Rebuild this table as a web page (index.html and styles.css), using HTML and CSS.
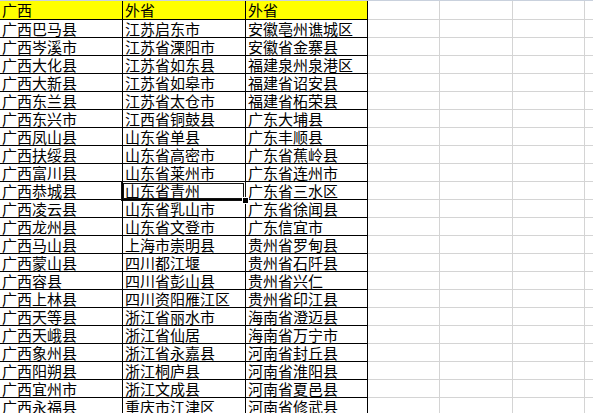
FILE: index.html
```html
<!DOCTYPE html>
<html lang="zh">
<head>
<meta charset="utf-8">
<link rel="stylesheet" href="styles.css">
</head>
<body>
<div class="sheet">
  <div class="topline"></div>
  <div class="row head">
    <div class="c c1">广西</div><div class="c c2">外省</div><div class="c c3">外省</div>
    <div class="g g1"></div><div class="g g2"></div><div class="g g3"></div><div class="g g4"></div>
  </div>
  <div class="row"><div class="c c1">广西巴马县</div><div class="c c2">江苏启东市</div><div class="c c3">安徽亳州谯城区</div><div class="g g1"></div><div class="g g2"></div><div class="g g3"></div><div class="g g4"></div></div>
  <div class="row"><div class="c c1">广西岑溪市</div><div class="c c2">江苏省溧阳市</div><div class="c c3">安徽省金寨县</div><div class="g g1"></div><div class="g g2"></div><div class="g g3"></div><div class="g g4"></div></div>
  <div class="row"><div class="c c1">广西大化县</div><div class="c c2">江苏省如东县</div><div class="c c3">福建泉州泉港区</div><div class="g g1"></div><div class="g g2"></div><div class="g g3"></div><div class="g g4"></div></div>
  <div class="row"><div class="c c1">广西大新县</div><div class="c c2">江苏省如皋市</div><div class="c c3">福建省诏安县</div><div class="g g1"></div><div class="g g2"></div><div class="g g3"></div><div class="g g4"></div></div>
  <div class="row"><div class="c c1">广西东兰县</div><div class="c c2">江苏省太仓市</div><div class="c c3">福建省柘荣县</div><div class="g g1"></div><div class="g g2"></div><div class="g g3"></div><div class="g g4"></div></div>
  <div class="row"><div class="c c1">广西东兴市</div><div class="c c2">江西省铜鼓县</div><div class="c c3">广东大埔县</div><div class="g g1"></div><div class="g g2"></div><div class="g g3"></div><div class="g g4"></div></div>
  <div class="row"><div class="c c1">广西凤山县</div><div class="c c2">山东省单县</div><div class="c c3">广东丰顺县</div><div class="g g1"></div><div class="g g2"></div><div class="g g3"></div><div class="g g4"></div></div>
  <div class="row"><div class="c c1">广西扶绥县</div><div class="c c2">山东省高密市</div><div class="c c3">广东省蕉岭县</div><div class="g g1"></div><div class="g g2"></div><div class="g g3"></div><div class="g g4"></div></div>
  <div class="row"><div class="c c1">广西富川县</div><div class="c c2">山东省莱州市</div><div class="c c3">广东省连州市</div><div class="g g1"></div><div class="g g2"></div><div class="g g3"></div><div class="g g4"></div></div>
  <div class="row"><div class="c c1">广西恭城县</div><div class="c c2 selected">山东省青州<span class="handle"></span></div><div class="c c3">广东省三水区</div><div class="g g1"></div><div class="g g2"></div><div class="g g3"></div><div class="g g4"></div></div>
  <div class="row"><div class="c c1">广西凌云县</div><div class="c c2">山东省乳山市</div><div class="c c3">广东省徐闻县</div><div class="g g1"></div><div class="g g2"></div><div class="g g3"></div><div class="g g4"></div></div>
  <div class="row"><div class="c c1">广西龙州县</div><div class="c c2">山东省文登市</div><div class="c c3">广东信宜市</div><div class="g g1"></div><div class="g g2"></div><div class="g g3"></div><div class="g g4"></div></div>
  <div class="row"><div class="c c1">广西马山县</div><div class="c c2">上海市崇明县</div><div class="c c3">贵州省罗甸县</div><div class="g g1"></div><div class="g g2"></div><div class="g g3"></div><div class="g g4"></div></div>
  <div class="row"><div class="c c1">广西蒙山县</div><div class="c c2">四川都江堰</div><div class="c c3">贵州省石阡县</div><div class="g g1"></div><div class="g g2"></div><div class="g g3"></div><div class="g g4"></div></div>
  <div class="row"><div class="c c1">广西容县</div><div class="c c2">四川省彭山县</div><div class="c c3">贵州省兴仁</div><div class="g g1"></div><div class="g g2"></div><div class="g g3"></div><div class="g g4"></div></div>
  <div class="row"><div class="c c1">广西上林县</div><div class="c c2">四川资阳雁江区</div><div class="c c3">贵州省印江县</div><div class="g g1"></div><div class="g g2"></div><div class="g g3"></div><div class="g g4"></div></div>
  <div class="row"><div class="c c1">广西天等县</div><div class="c c2">浙江省丽水市</div><div class="c c3">海南省澄迈县</div><div class="g g1"></div><div class="g g2"></div><div class="g g3"></div><div class="g g4"></div></div>
  <div class="row"><div class="c c1">广西天峨县</div><div class="c c2">浙江省仙居</div><div class="c c3">海南省万宁市</div><div class="g g1"></div><div class="g g2"></div><div class="g g3"></div><div class="g g4"></div></div>
  <div class="row"><div class="c c1">广西象州县</div><div class="c c2">浙江省永嘉县</div><div class="c c3">河南省封丘县</div><div class="g g1"></div><div class="g g2"></div><div class="g g3"></div><div class="g g4"></div></div>
  <div class="row"><div class="c c1">广西阳朔县</div><div class="c c2">浙江桐庐县</div><div class="c c3">河南省淮阳县</div><div class="g g1"></div><div class="g g2"></div><div class="g g3"></div><div class="g g4"></div></div>
  <div class="row"><div class="c c1">广西宜州市</div><div class="c c2">浙江文成县</div><div class="c c3">河南省夏邑县</div><div class="g g1"></div><div class="g g2"></div><div class="g g3"></div><div class="g g4"></div></div>
  <div class="row"><div class="c c1">广西永福县</div><div class="c c2">重庆市江津区</div><div class="c c3">河南省修武县</div><div class="g g1"></div><div class="g g2"></div><div class="g g3"></div><div class="g g4"></div></div>
</div>
</body>
</html>
```
FILE: styles.css
```css
html, body {
  margin: 0;
  padding: 0;
  background: #ffffff;
  overflow: hidden;
}
.sheet {
  width: 593px;
  height: 413px;
  overflow: hidden;
  font-family: "Noto Sans CJK SC", "Noto Sans", sans-serif;
  font-size: 15px;
  color: #000;
}
.topline {
  height: 1px;
  background: #c9d1dd;
}
.row {
  display: grid;
  grid-template-columns: 123px 123px 122px 72px 73px 72px 30px;
  height: 18px;
}
.row.head {
  height: 19px;
}
.c {
  box-sizing: border-box;
  border-right: 1px solid #000;
  border-bottom: 1px solid #000;
  padding-left: 2px;
  line-height: 17px;
  white-space: nowrap;
  overflow: visible;
  position: relative;
}
.head .c {
  background: #ffff00;
  line-height: 18px;
}
.g {
  box-sizing: border-box;
  border-right: 1px solid #d4d4d4;
  border-bottom: 1px solid #d4d4d4;
}
.selected::after {
  content: "";
  position: absolute;
  left: -2px;
  top: -1px;
  right: -1px;
  bottom: -2px;
  border: 3px double #111;
  pointer-events: none;
}
.handle {
  position: absolute;
  right: -4px;
  bottom: -5px;
  width: 5px;
  height: 5px;
  background: #000;
  border: 1px solid #fff;
  z-index: 2;
}
```
